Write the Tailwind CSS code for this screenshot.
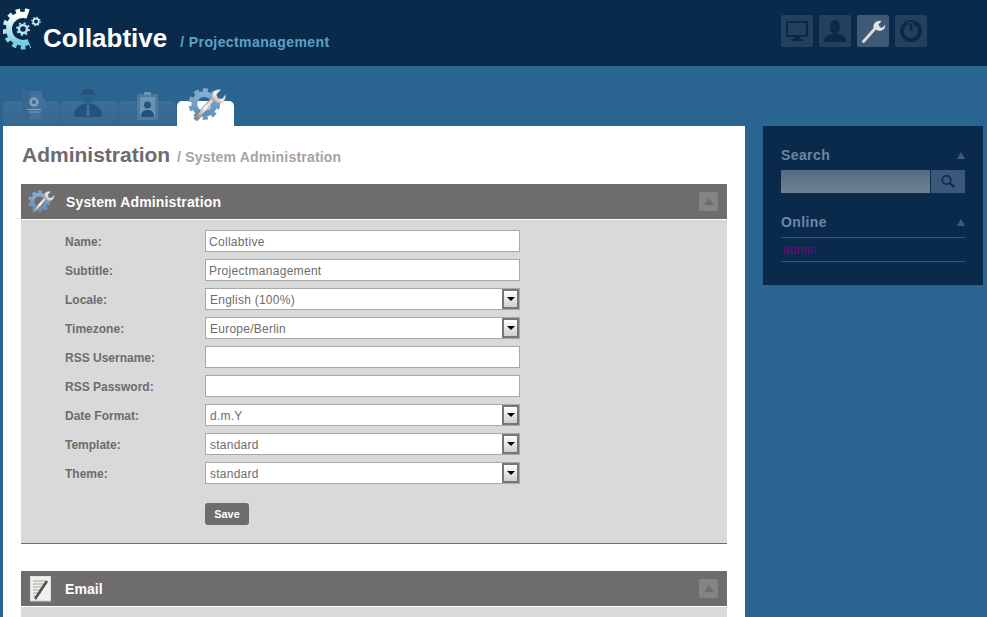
<!DOCTYPE html>
<html lang="en">
<head>
  <meta charset="UTF-8" />
  <title>Collabtive</title>
  <script src="https://cdn.jsdelivr.net/npm/@tailwindcss/browser@4"></script>
</head>
<body class="h-[617px] overflow-hidden bg-[#2a6591] font-['Liberation_Sans',Arial,sans-serif]">

  <svg class="absolute w-0 h-0">
    <defs>
      <linearGradient id="logo-grad" x1="0" y1="0" x2="0" y2="1">
        <stop offset="0" stop-color="#ffffff" />
        <stop offset="1" stop-color="#74cde0" />
      </linearGradient>
      <linearGradient id="steel" x1="0" y1="1" x2="1" y2="0">
        <stop offset="0" stop-color="#8a8a8a" />
        <stop offset="0.5" stop-color="#f6f6f6" />
        <stop offset="1" stop-color="#bdbdbd" />
      </linearGradient>
      <linearGradient id="gear-blue" x1="0" y1="0" x2="0" y2="1">
        <stop offset="0" stop-color="#86add0" />
        <stop offset="1" stop-color="#5f90bb" />
      </linearGradient>
      <symbol id="gear-wrench" viewBox="0 0 60 56">
        <circle cx="25" cy="28" r="15.500" fill="none" stroke="url(#gear-blue)" stroke-width="9" />
        <circle cx="25" cy="28" r="22" fill="none" stroke="url(#gear-blue)" stroke-width="5" stroke-dasharray="8 6.400" />
        <path d="M13 50 L41 18" stroke="#6d6d6d" stroke-width="8" stroke-linecap="round" fill="none" />
        <path d="M13 50 L41 18" stroke="url(#steel)" stroke-width="6" stroke-linecap="round" fill="none" />
        <path d="M36 19 C35 10 43 3 51 6 L44 13 L46 19 L53 20 L58 13 C60 22 52 29 43 26 Z" fill="url(#steel)" stroke="#8a8a8a" stroke-width="0.800" />
      </symbol>
      <symbol id="wrench" viewBox="0 0 32 32">
        <path d="M6.500 26.500 L18.500 13" stroke="#dcdcdc" stroke-width="2.800" stroke-linecap="round" fill="none" />
        <path d="M16.500 12.500 C16 8 20 5 24.500 6 L21.500 9.500 L23 12.500 L26 12.500 L28 9.500 C29 13.500 25 17 20.500 15.500 Z" fill="#e4e4e4" />
      </symbol>
    </defs>
  </svg>

  <!-- header -->
  <header class="h-[66px] bg-[#0a2a4b] flex items-start">
    <div class="flex items-start w-[781px] shrink-0">
      <svg class="w-[42px] h-[44px] ml-[3px] mt-[7px] shrink-0" viewBox="0 0 42 44">
        <path d="M24.500 8.700 A14 14 0 1 0 25.600 34.800" fill="none" stroke="url(#logo-grad)" stroke-width="6" />
        <path d="M26 4.500 A18.500 18.500 0 1 0 27.400 39" fill="none" stroke="url(#logo-grad)" stroke-width="4" stroke-dasharray="4.500 4.300" />
        <circle cx="20" cy="22" r="4" fill="none" stroke="#b5e3ec" stroke-width="2.500" />
        <circle cx="20" cy="22" r="6" fill="none" stroke="#b5e3ec" stroke-width="1.800" stroke-dasharray="2 2.700" />
        <circle cx="33" cy="14.500" r="2.800" fill="none" stroke="#c9ebf1" stroke-width="1.700" />
        <circle cx="33" cy="14.500" r="4.200" fill="none" stroke="#c9ebf1" stroke-width="1.200" stroke-dasharray="1.500 1.800" />
      </svg>
      <span class="ml-[-2px] mt-[22px] text-[26px] leading-[32px] font-bold text-white">Collabtive</span>
      <span class="ml-[13px] mt-[33px] text-[14px] leading-[18px] font-bold text-[#5ba3c4] tracking-[0.4px]">/ Projectmanagement</span>
    </div>
    <nav class="flex gap-[6px] mt-[15px]">
      <a class="w-[32px] h-[32px] rounded-[2px] bg-[#22415f] flex items-center justify-center">
        <svg class="w-[24px] h-[24px]" viewBox="0 0 24 24" fill="#0a2a4b"><path fill-rule="evenodd" d="M1 2h22v16H1z M3 4v12h18V4z" /><path d="M9 18h6v2h3v2H6v-2h3z" /></svg>
      </a>
      <a class="w-[32px] h-[32px] rounded-[2px] bg-[#22415f] flex items-center justify-center">
        <svg class="w-[24px] h-[24px]" viewBox="0 0 24 24" fill="#0a2a4b"><ellipse cx="12" cy="8" rx="5" ry="7" /><path d="M1 23c0-6 4-7 8-8h6c4 1 8 2 8 8z" /></svg>
      </a>
      <a class="w-[32px] h-[32px] rounded-[2px] bg-[#3e5a77] flex items-center justify-center">
        <svg class="w-[32px] h-[32px]"><use href="#wrench" /></svg>
      </a>
      <a class="w-[32px] h-[32px] rounded-[2px] bg-[#22415f] flex items-center justify-center">
        <svg class="w-[24px] h-[24px]" viewBox="0 0 24 24" fill="none"><circle cx="12" cy="12" r="9" stroke="#0a2a4b" stroke-width="4" /><path d="M12 3v10" stroke="#22415f" stroke-width="5" /><path d="M12 4v8" stroke="#0a2a4b" stroke-width="2.600" /></svg>
      </a>
    </nav>
  </header>

  <!-- tabs -->
  <div class="flex gap-[1px] ml-[3px] mt-[22px] h-[38px] items-end">
    <a class="relative w-[57px] h-[25px] rounded-t-[5px] bg-gradient-to-b from-[#3c6e97] to-[#34698f]">
      <svg class="absolute left-[19px] top-[-10px] w-[24px] h-[28px] blur-[0.4px]" viewBox="0 0 24 28"><path d="M0 0h20v7h3v9h-3v12H0z" fill="#44709a" /><path d="M0 0h8v28H0z" fill="#3a6690" /><circle cx="12" cy="11" r="3.500" fill="none" stroke="#7ea2c0" stroke-width="2.400" /><path d="M5 18h14v1H5zM7 20.500h10v1H7z" fill="#7ea2c0" /></svg>
    </a>
    <a class="relative w-[57px] h-[25px] rounded-t-[5px] bg-gradient-to-b from-[#3c6e97] to-[#34698f]">
      <svg class="absolute left-[12px] top-[-13px] w-[30px] h-[30px] blur-[0.4px]" viewBox="0 0 30 30" fill="#24527c"><path d="M9 5q1-4 6-4t6 4l2 2H7z" /><rect x="11" y="8" width="8" height="8" rx="3.500" fill="#2a5d88" /><path d="M1 29c0-9 5-12 10-13h8c5 1 10 4 10 13z" /><path d="M14 16h2l1 12h-4z" fill="#3a6f9c" /></svg>
    </a>
    <a class="relative w-[57px] h-[25px] rounded-t-[5px] bg-gradient-to-b from-[#3c6e97] to-[#34698f]">
      <svg class="absolute left-[18px] top-[-9px] w-[21px] h-[28px] blur-[0.4px]" viewBox="0 0 21 28"><path d="M0 2h21v26H0z" fill="#4f7aa0" /><path d="M3 5h15v20H3z" fill="#6b93b4" /><path d="M7 0h7v3H7z" fill="#6b93b4" /><circle cx="10.500" cy="13" r="3.500" fill="#24527c" /><path d="M4 25c0-6 3-7 6.500-7s6.500 1 6.500 7z" fill="#24527c" /></svg>
    </a>
    <a class="relative w-[57px] h-[25px] rounded-t-[5px] bg-white">
      <svg class="absolute left-[11px] top-[-15px] w-[39px] h-[36px]"><use href="#gear-wrench" /></svg>
    </a>
  </div>

  <div class="flex items-start">
    <!-- main content -->
    <main class="ml-[3px] w-[742px] h-[491px] overflow-hidden bg-white px-[18px] shrink-0">
      <h1 class="mt-[15px] ml-[1px] h-[28px] leading-[28px] text-[21px] font-bold text-[#6e6b6c] whitespace-nowrap">Administration <span class="text-[14px] text-[#a5a3a4] ml-[1px] tracking-[0.2px]">/ System Administration</span></h1>

      <section class="mt-[15px]">
        <div class="h-[35px] bg-[#6f6c6d] flex items-center relative">
          <svg class="ml-[7px] w-[27px] h-[25px]"><use href="#gear-wrench" /></svg>
          <h2 class="ml-[11px] pt-[2px] text-[14px] font-bold text-white tracking-[0.15px]">System Administration</h2>
          <span class="ml-auto mr-[9px] w-[19px] h-[19px] rounded-[2px] bg-[#868384] flex items-center justify-center">
            <span class="w-0 h-0 border-x-[5px] border-x-transparent border-b-[7px] border-b-[#6f6c6d]"></span>
          </span>
        </div>
        <form class="mt-[1px] h-[324px] bg-[#d9d9d9] border-b border-[#6f6c6d] pt-[10px] pl-[44px]">
          <div class="grid grid-cols-[140px_315px] auto-rows-[22px] gap-y-[7px] items-center text-[12px] text-[#6e6b6c]">
            <label class="font-bold pt-[2px]">Name:</label>
            <input class="h-[22px] bg-white border border-[#a8a8a8] px-[3px] pt-[2px] text-[12px] text-[#6e6b6c] outline-none tracking-[0.3px]" value="Collabtive" />
            <label class="font-bold pt-[2px]">Subtitle:</label>
            <input class="h-[22px] bg-white border border-[#a8a8a8] px-[3px] pt-[2px] text-[12px] text-[#6e6b6c] outline-none tracking-[0.3px]" value="Projectmanagement" />
            <label class="font-bold pt-[2px]">Locale:</label>
            <div class="relative h-[22px] bg-white border border-[#a8a8a8] pl-[4px] leading-[22px] tracking-[0.25px]">English (100%)
              <span class="absolute right-0 top-0 w-[17px] h-[20px] border-2 border-[#777777] bg-gradient-to-b from-white to-[#cfcfcf] flex items-center justify-center"><span class="w-0 h-0 border-x-[4px] border-x-transparent border-t-[4px] border-t-black"></span></span>
            </div>
            <label class="font-bold pt-[2px]">Timezone:</label>
            <div class="relative h-[22px] bg-white border border-[#a8a8a8] pl-[4px] leading-[22px] tracking-[0.25px]">Europe/Berlin
              <span class="absolute right-0 top-0 w-[17px] h-[20px] border-2 border-[#777777] bg-gradient-to-b from-white to-[#cfcfcf] flex items-center justify-center"><span class="w-0 h-0 border-x-[4px] border-x-transparent border-t-[4px] border-t-black"></span></span>
            </div>
            <label class="font-bold pt-[2px]">RSS Username:</label>
            <input class="h-[22px] bg-white border border-[#a8a8a8] px-[3px] outline-none" />
            <label class="font-bold pt-[2px]">RSS Password:</label>
            <input class="h-[22px] bg-white border border-[#a8a8a8] px-[3px] outline-none" />
            <label class="font-bold pt-[2px]">Date Format:</label>
            <div class="relative h-[22px] bg-white border border-[#a8a8a8] pl-[4px] leading-[22px] tracking-[0.25px]">d.m.Y
              <span class="absolute right-0 top-0 w-[17px] h-[20px] border-2 border-[#777777] bg-gradient-to-b from-white to-[#cfcfcf] flex items-center justify-center"><span class="w-0 h-0 border-x-[4px] border-x-transparent border-t-[4px] border-t-black"></span></span>
            </div>
            <label class="font-bold pt-[2px]">Template:</label>
            <div class="relative h-[22px] bg-white border border-[#a8a8a8] pl-[4px] leading-[22px] tracking-[0.25px]">standard
              <span class="absolute right-0 top-0 w-[17px] h-[20px] border-2 border-[#777777] bg-gradient-to-b from-white to-[#cfcfcf] flex items-center justify-center"><span class="w-0 h-0 border-x-[4px] border-x-transparent border-t-[4px] border-t-black"></span></span>
            </div>
            <label class="font-bold pt-[2px]">Theme:</label>
            <div class="relative h-[22px] bg-white border border-[#a8a8a8] pl-[4px] leading-[22px] tracking-[0.25px]">standard
              <span class="absolute right-0 top-0 w-[17px] h-[20px] border-2 border-[#777777] bg-gradient-to-b from-white to-[#cfcfcf] flex items-center justify-center"><span class="w-0 h-0 border-x-[4px] border-x-transparent border-t-[4px] border-t-black"></span></span>
            </div>
          </div>
          <button type="button" class="block mt-[19px] ml-[140px] w-[44px] h-[22px] rounded-[3px] bg-[#6f6c6d] text-white text-[11px] font-bold">Save</button>
        </form>
      </section>

      <section class="mt-[27px]">
        <div class="h-[35px] bg-[#6f6c6d] flex items-center">
          <svg class="ml-[9px] w-[21px] h-[26px]" viewBox="0 0 21 26"><rect width="21" height="25" fill="#f0f0ec" stroke="#cfcfcf" /><path d="M3 5h13M3 8h11M3 11h9M3 14h7M3 17h8M3 20h6" stroke="#a5a5a5" stroke-width="1" /><path d="M5 23 L17 5" stroke="#4f4f4f" stroke-width="2.500" /></svg>
          <h2 class="ml-[14px] pt-[2px] text-[14px] font-bold text-white tracking-[0.1px]">Email</h2>
          <span class="ml-auto mr-[9px] w-[19px] h-[19px] rounded-[2px] bg-[#868384] flex items-center justify-center">
            <span class="w-0 h-0 border-x-[5px] border-x-transparent border-b-[7px] border-b-[#6f6c6d]"></span>
          </span>
        </div>
        <div class="mt-[1px] h-[40px] bg-[#d9d9d9]"></div>
      </section>
    </main>

    <!-- sidebar -->
    <aside class="ml-[18px] w-[220px] h-[159px] bg-[#0a2a4b] px-[18px] pt-[21px]">
      <div class="flex items-center justify-between h-[16px] text-[14px] font-bold text-[#6d87a1] tracking-[0.4px]">
        <span>Search</span>
        <span class="w-0 h-0 border-x-[4.500px] border-x-transparent border-b-[7px] border-b-[#3e5a77]"></span>
      </div>
      <div class="flex gap-[1px] mt-[7px] h-[23px]">
        <input class="w-[149px] bg-gradient-to-b from-[#566a80] to-[#6f8296] outline-none" />
        <button class="flex-1 bg-[#39587a] flex items-center justify-center">
          <svg class="w-[16px] h-[16px]" viewBox="0 0 16 16" fill="none" stroke="#0a2a4b"><circle cx="6.500" cy="6" r="4.200" stroke-width="1.600" /><path d="M10 9.500l4.500 3.700" stroke-width="2.200" /></svg>
        </button>
      </div>
      <div class="flex items-center justify-between h-[16px] mt-[21px] text-[14px] font-bold text-[#6d87a1] tracking-[0.4px]">
        <span>Online</span>
        <span class="w-0 h-0 border-x-[4.500px] border-x-transparent border-b-[7px] border-b-[#3e5a77]"></span>
      </div>
      <ul class="mt-[7px] border-t border-[#3a5673]">
        <li class="h-[24px] leading-[25px] border-b border-[#3a5673] pl-[2px] text-[12px] tracking-[0.2px] text-[#800080]">admin</li>
      </ul>
    </aside>
  </div>
</body>
</html>
